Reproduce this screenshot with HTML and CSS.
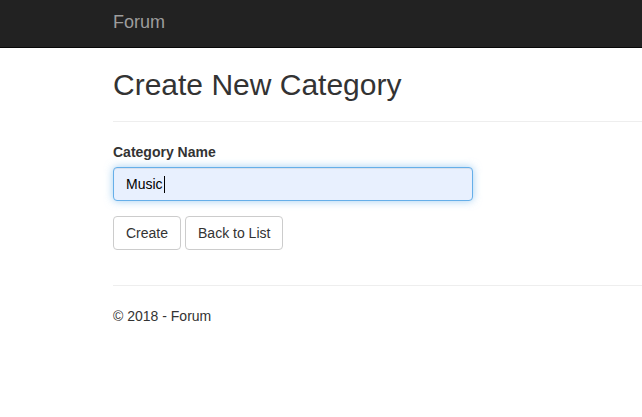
FILE: index.html
```html
<!DOCTYPE html>
<html lang="en">
<head>
<meta charset="utf-8">
<title>Create - Forum</title>
<link rel="stylesheet" href="styles.css">
</head>
<body>
<div class="navbar">
  <div class="container">
    <a class="brand" href="#">Forum</a>
  </div>
</div>
<div class="container body-content">
  <h2 class="title">Create New Category</h2>
  <hr class="rule">
  <form class="form">
    <div class="form-group">
      <label class="label">Category Name</label>
      <div class="field"><span class="field-text">Music</span><span class="caret"></span></div>
    </div>
    <div class="form-group actions">
      <button type="button" class="btn">Create</button>
      <button type="button" class="btn">Back to List</button>
    </div>
  </form>
  <hr class="rule">
  <footer class="footer">
    <p class="copy">© 2018 - Forum</p>
  </footer>
</div>
</body>
</html>
```

FILE: styles.css
```css
body {
  margin: 0;
  font-family: "Liberation Sans", Arial, Helvetica, sans-serif;
  font-size: 14px;
  line-height: 1.42857143;
  color: #333;
  background: #fff;
}
* {
  box-sizing: border-box;
}
.container {
  margin-left: 98px;
  padding: 0 0 0 15px;
}
.navbar {
  height: 48px;
  background: #222;
  border-bottom: 1px solid #080808;
}
.brand {
  display: inline-block;
  padding-top: 12px;
  font-size: 18px;
  line-height: 20px;
  color: #9d9d9d;
  text-decoration: none;
}
.title {
  margin: 20px 0 10px;
  font-size: 30px;
  font-weight: 500;
  line-height: 1.1;
  color: #333;
}
.form {
  display: flow-root;
  margin: 0;
}
.rule {
  margin: 20px 0;
  border: 0;
  border-top: 1px solid #eee;
  height: 0;
}
.form-group {
  margin-bottom: 15px;
}
.label {
  display: block;
  margin-bottom: 5px;
  font-weight: bold;
}
.field {
  display: flex;
  align-items: center;
  width: 360px;
  height: 34px;
  padding: 6px 12px;
  background: #e8f0fe;
  border: 1px solid #66afe9;
  border-radius: 4px;
  box-shadow: inset 0 1px 1px rgba(0,0,0,.075), 0 0 8px rgba(102,175,233,.6);
  color: #000;
}
.caret {
  display: inline-block;
  width: 1px;
  height: 17px;
  background: #000;
  margin-left: 1px;
}
.actions {
  display: flex;
  gap: 4px;
}
.btn {
  height: 34px;
  padding: 6px 12px;
  font-family: inherit;
  font-size: 14px;
  line-height: 1.42857143;
  color: #333;
  background: #fff;
  border: 1px solid #ccc;
  border-radius: 4px;
}
.copy {
  margin: 0 0 10px;
}
```
